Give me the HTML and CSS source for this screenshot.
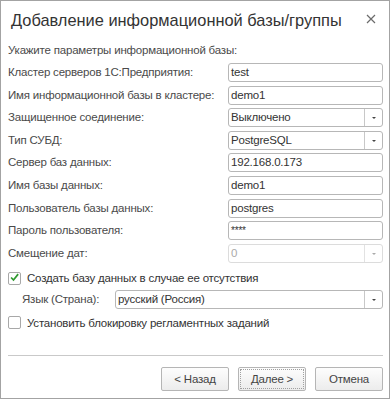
FILE: index.html
```html
<!DOCTYPE html>
<html lang="ru">
<head>
    <meta charset="UTF-8">
    <meta name="viewport" content="width=device-width, initial-scale=1.0">
    <title>Добавление информационной базы/группы</title>
    <link rel="stylesheet" href="styles.css">
</head>
<body>
    <div class="window">
        <div class="title-bar">
            <h1>Добавление информационной базы/группы</h1>
            <span class="close">
                <svg width="10" height="10" viewBox="0 0 10 10"><path d="M1 1L9 9M9 1L1 9" stroke="#6b6b6b" stroke-width="1.2"/></svg>
            </span>
        </div>
        <div class="content">
            <div class="hint">Укажите параметры информационной базы:</div>
            <div class="form">
                <label>Кластер серверов 1С:Предприятия:</label>
                <div class="field">test</div>
                <label>Имя информационной базы в кластере:</label>
                <div class="field">demo1</div>
                <label>Защищенное соединение:</label>
                <div class="field select"><span class="value">Выключено</span><span class="arrow"></span></div>
                <label>Тип СУБД:</label>
                <div class="field select"><span class="value">PostgreSQL</span><span class="arrow"></span></div>
                <label>Сервер баз данных:</label>
                <div class="field">192.168.0.173</div>
                <label>Имя базы данных:</label>
                <div class="field">demo1</div>
                <label>Пользователь базы данных:</label>
                <div class="field">postgres</div>
                <label>Пароль пользователя:</label>
                <div class="field password">****</div>
                <label>Смещение дат:</label>
                <div class="field select disabled"><span class="value">0</span><span class="arrow"></span></div>
            </div>
            <div class="check-row create">
                <span class="box">
                    <svg width="13" height="13" viewBox="0 0 13 13"><path d="M2.5 6.5L5.3 9.5L10.8 2.5" fill="none" stroke="#2f9a2f" stroke-width="2"/></svg>
                </span>
                <span>Создать базу данных в случае ее отсутствия</span>
            </div>
            <div class="lang-row">
                <label>Язык (Страна):</label>
                <div class="field select"><span class="value">русский (Россия)</span><span class="arrow"></span></div>
            </div>
            <div class="check-row lock">
                <span class="box"></span>
                <span>Установить блокировку регламентных заданий</span>
            </div>
            <div class="separator"></div>
            <div class="buttons">
                <button>&lt; Назад</button>
                <button class="default">Далее &gt;</button>
                <button>Отмена</button>
            </div>
        </div>
    </div>
</body>
</html>
```

FILE: styles.css
```css
body {
    margin: 0;
    background: #fff;
    font-family: "Liberation Sans", Arial, sans-serif;
    font-size: 11.5px;
    letter-spacing: -0.2px;
    color: #4a4a4a;
}
.window {
    box-sizing: border-box;
    width: 390px;
    height: 399px;
    border: 1px solid #a3a3a3;
    background: #fff;
}
.title-bar {
    height: 38px;
    display: flex;
    align-items: center;
    justify-content: space-between;
    padding: 0 13px 0 10px;
}
.title-bar h1 {
    margin: 0;
    font-size: 16.4px;
    font-weight: normal;
    letter-spacing: 0;
    color: #333;
}
.close {
    display: flex;
    margin-top: -3px;
}
.content {
    padding: 0 6px 0 7px;
}
.hint {
    margin-top: 4px;
    line-height: 15px;
}
.form {
    margin-top: 5px;
    display: grid;
    grid-template-columns: 220px 155px;
    row-gap: 3.6px;
}
.form label, .lang-row label {
    line-height: 19px;
    white-space: nowrap;
}
.field {
    box-sizing: border-box;
    height: 19px;
    line-height: 17px;
    border: 1px solid #b7b7b7;
    border-radius: 3px;
    padding: 0 2px;
    color: #333;
    display: flex;
}
.field.password {
    font-size: 10px;
}
.select {
    padding-right: 0;
}
.select .value {
    flex: 1;
}
.select .arrow {
    width: 17px;
    border-left: 1px solid #c8c8c8;
    position: relative;
}
.select .arrow::after {
    content: "";
    position: absolute;
    left: 7px;
    top: 8px;
    border-left: 2px solid transparent;
    border-right: 2px solid transparent;
    border-top: 2px solid #444;
}
.disabled {
    border-color: #dcdcdc;
    color: #aaa;
}
.disabled .arrow {
    border-left-color: #e2e2e2;
}
.disabled .arrow::after {
    border-top-color: #aaa;
}
.check-row {
    display: flex;
    align-items: center;
    gap: 6px;
    height: 19px;
    color: #333;
}
.check-row.create {
    margin-top: 6px;
}
.check-row.lock {
    margin-top: 4.5px;
}
.box {
    box-sizing: border-box;
    width: 13px;
    height: 13px;
    border: 1px solid #a8a8a8;
    border-radius: 2px;
    display: flex;
    align-items: center;
    justify-content: center;
}
.box svg {
    margin-top: -1px;
}
.lang-row {
    margin-top: 2px;
    display: grid;
    grid-template-columns: 93px 268px;
    padding-left: 14px;
}
.separator {
    margin-top: 23px;
    border-top: 1px solid #c9c9c9;
}
.buttons {
    margin-top: 11px;
    display: flex;
    justify-content: flex-end;
    gap: 9px;
}
button {
    width: 68px;
    height: 24px;
    font-family: inherit;
    font-size: 11.5px;
    letter-spacing: -0.2px;
    color: #444;
    background: linear-gradient(#fdfdfd, #ececec);
    border: 1px solid #b5b5b5;
    border-radius: 2px;
    padding: 0;
}
button.default {
    outline: 1px dotted #a0a0a0;
    outline-offset: -3px;
}
```
